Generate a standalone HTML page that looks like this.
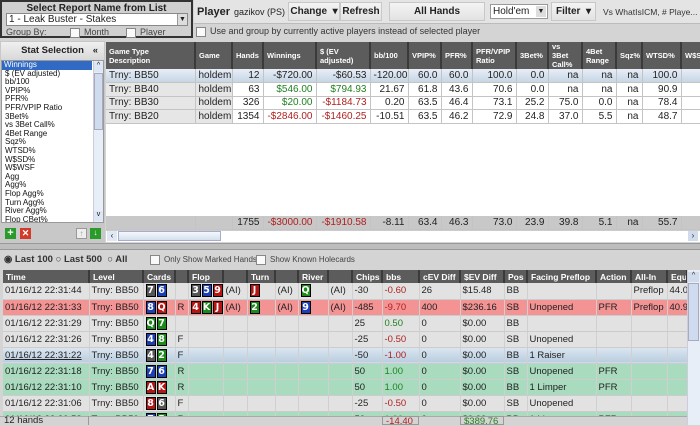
<!DOCTYPE html><html><head><style>
*{box-sizing:border-box;margin:0;padding:0}
body{width:700px;height:425px;overflow:hidden;background:#d4d4d4;font-family:"Liberation Sans",sans-serif;font-size:10px;color:#222;position:relative}
.a{position:absolute;white-space:nowrap}
.btn{position:absolute;background:linear-gradient(#f4f4f4,#e2e2e2);border:1px solid #c8c8c8;font-weight:bold;font-size:10px;text-align:center;line-height:17px;height:19px;top:2px}
table{border-collapse:collapse;table-layout:fixed;position:absolute}
td{white-space:nowrap;overflow:hidden;padding:0 2px}
.g th{background:#5c5c5c;color:#fff;font-size:7.5px;font-weight:bold;text-align:left;padding:0 3px;border-right:2px solid #3a3a3a;height:26px;line-height:9px;white-space:normal;overflow:hidden}
.g td{font-size:10px;height:13.5px;text-align:right;border-right:1px solid #c4c4c4;border-bottom:1px solid #c4c4c4;background:#fff;padding:0 3px}
.g td.l{text-align:left;background:#e6e6e6}
.g tr.s td{background:linear-gradient(#e8eef6,#c6d6e6)}
.r{color:#b02020}.gr{color:#208020}
.h th{background:#5c5c5c;color:#fff;font-size:8.5px;font-weight:bold;text-align:left;padding:0 3px;border-right:2px solid #3a3a3a;height:13px;overflow:hidden;white-space:nowrap}
.h td{height:16px;font-size:9.5px;border-right:1px solid #d0d0d0;border-bottom:1px solid #ccc;background:#e2e2e2;padding:0 2px}
.h tr.rd td{background:#f39393}
.h tr.gn td{background:#a9dcbf}
.h tr.sl td{background:linear-gradient(#dce6f0,#b8cee0);border-top:1px solid #556;}
.c{display:inline-block;width:10px;height:13px;color:#fff;font-weight:bold;line-height:12px;text-align:center;margin-right:1px;vertical-align:middle;border:1px solid #000;font-family:"DejaVu Sans",sans-serif;font-size:9.5px}
.k{background:#555}.b{background:#1d3fb5}.e{background:#b51515}.n{background:#1b8a1b}
.cb{display:inline-block;width:10px;height:10px;border:1px solid #888;background:#fafafa;vertical-align:middle;margin-right:4px}
</style></head><body>
<div class="a" style="left:0;top:0;width:193px;height:38px;border:2px solid #333;background:#d0d0d0">
<div class="a" style="left:0;top:1px;width:189px;text-align:center;font-weight:bold;font-size:10px">Select Report Name from List</div>
<div class="a" style="left:4px;top:11px;width:182px;height:13px;background:#fff;border:1px solid #888;font-size:10px;line-height:11px;padding-left:2px">1 - Leak Buster - Stakes</div>
<div class="a" style="left:175px;top:12px;width:10px;height:11px;background:#ddd;border-left:1px solid #999;font-size:7px;text-align:center;line-height:11px">▼</div>
<div class="a" style="left:4px;top:25px;font-size:9px;color:#444">Group By:</div>
<div class="a" style="left:68px;top:25px;font-size:9px;color:#444"><span class="cb"></span>Month</div>
<div class="a" style="left:124px;top:25px;font-size:9px;color:#444"><span class="cb"></span>Player</div>
</div>
<div class="a" style="left:194px;top:0;width:506px;height:24px;background:#e4e4e4;border-bottom:1px solid #bbb"></div>
<div class="a" style="left:197px;top:6px;font-weight:bold;font-size:11px">Player</div>
<div class="a" style="left:234px;top:7px;font-size:9px">gazikov (PS)</div>
<div class="btn" style="left:288px;width:52px">Change &nbsp;▾</div>
<div class="btn" style="left:340px;width:42px">Refresh</div>
<div class="btn" style="left:389px;width:96px">All Hands</div>
<div class="a" style="left:490px;top:4px;width:58px;height:15px;background:#fff;border:1px solid #999;font-size:10px;line-height:13px;padding-left:2px">Hold'em<span style="position:absolute;right:1px;top:1px;width:10px;height:11px;background:#ddd;font-size:7px;text-align:center;line-height:11px">▼</span></div>
<div class="btn" style="left:551px;width:45px">Filter &nbsp;▾</div>
<div class="a" style="left:603px;top:7px;font-size:8.5px;color:#333">Vs WhatIsICM, # Playe...</div>
<div class="a" style="left:196px;top:26px;font-size:9px;color:#333"><span class="cb"></span>Use and group by currently active players instead of selected player</div>
<div class="a" style="left:0;top:41px;width:105px;height:202px;background:#c8c8c8"></div>
<div class="a" style="left:1px;top:42px;width:103px;height:18px;background:linear-gradient(#f0f0f0,#d8d8d8);font-weight:bold;font-size:9.5px;text-align:center;line-height:18px">Stat Selection<span style="position:absolute;right:6px">«</span></div>
<div class="a" style="left:1px;top:60px;width:103px;height:163px;background:#fff;border:1px solid #999;overflow:hidden;font-size:8px;line-height:8.6px;color:#111">
<div style="background:#316ac5;color:#fff;padding-left:2px;width:90px">Winnings</div>
<div style="padding-left:3px">$ (EV adjusted)<br>bb/100<br>VPIP%<br>PFR%<br>PFR/VPIP Ratio<br>3Bet%<br>vs 3Bet Call%<br>4Bet Range<br>Sqz%<br>WTSD%<br>W$SD%<br>W$WSF<br>Agg<br>Agg%<br>Flop Agg%<br>Turn Agg%<br>River Agg%<br>Flop CBet%</div>
<div class="a" style="left:91px;top:0;width:11px;height:162px;background:#e8eef8;border-left:1px solid #ccd"></div>
<div class="a" style="left:92px;top:1px;width:9px;height:10px;background:#dde6f4;font-size:7px;text-align:center">^</div>
<div class="a" style="left:92px;top:12px;width:9px;height:57px;background:#cfdcf0;border:1px solid #aab"></div>
<div class="a" style="left:92px;top:150px;width:9px;height:10px;background:#dde6f4;font-size:7px;text-align:center">v</div>
</div>
<div class="a" style="left:5px;top:228px;width:11px;height:11px;background:#2a9a2a;color:#fff;font-weight:bold;font-size:11px;line-height:10px;text-align:center">+</div>
<div class="a" style="left:20px;top:228px;width:11px;height:11px;background:#d23a2a;color:#fff;font-weight:bold;font-size:9px;line-height:11px;text-align:center">✕</div>
<div class="a" style="left:76px;top:228px;width:11px;height:11px;background:#eee;border:1px solid #999;font-size:8px;line-height:9px;text-align:center;color:#999">↑</div>
<div class="a" style="left:90px;top:228px;width:11px;height:11px;background:#2a9a2a;color:#fff;font-size:8px;line-height:10px;text-align:center">↓</div>
<div class="a" style="left:106px;top:42px;width:594px;height:188px;background:#fff"></div>
<table class="g" style="left:106px;top:42px;width:610px">
<colgroup><col style="width:89px"><col style="width:37px"><col style="width:31px"><col style="width:53px"><col style="width:54px"><col style="width:38px"><col style="width:33px"><col style="width:31px"><col style="width:44px"><col style="width:32px"><col style="width:34px"><col style="width:34px"><col style="width:26px"><col style="width:39px"><col style="width:35px"></colgroup>
<tr><th>Game Type Description</th><th>Game</th><th>Hands</th><th>Winnings</th><th>$ (EV adjusted)</th><th>bb/100</th><th>VPIP%</th><th>PFR%</th><th>PFR/VPIP Ratio</th><th>3Bet%</th><th>vs 3Bet Call%</th><th>4Bet Range</th><th>Sqz%</th><th>WTSD%</th><th>W$SD</th></tr>
<tr class="s"><td class="l">Trny: BB50</td><td class="l">holdem</td><td>12</td><td>-$720.00</td><td>-$60.53</td><td>-120.00</td><td>60.0</td><td>60.0</td><td>100.0</td><td>0.0</td><td>na</td><td>na</td><td>na</td><td>100.0</td><td></td></tr>
<tr><td class="l">Trny: BB40</td><td class="l">holdem</td><td>63</td><td class="gr">$546.00</td><td class="gr">$794.93</td><td>21.67</td><td>61.8</td><td>43.6</td><td>70.6</td><td>0.0</td><td>na</td><td>na</td><td>na</td><td>90.9</td><td>4</td></tr>
<tr><td class="l">Trny: BB30</td><td class="l">holdem</td><td>326</td><td class="gr">$20.00</td><td class="r">-$1184.73</td><td>0.20</td><td>63.5</td><td>46.4</td><td>73.1</td><td>25.2</td><td>75.0</td><td>0.0</td><td>na</td><td>78.4</td><td>4</td></tr>
<tr><td class="l">Trny: BB20</td><td class="l">holdem</td><td>1354</td><td class="r">-$2846.00</td><td class="r">-$1460.25</td><td>-10.51</td><td>63.5</td><td>46.2</td><td>72.9</td><td>24.8</td><td>37.0</td><td>5.5</td><td>na</td><td>48.7</td><td>4</td></tr>
</table>
<table class="g" style="left:106px;top:216px;width:610px">
<colgroup><col style="width:89px"><col style="width:37px"><col style="width:31px"><col style="width:53px"><col style="width:54px"><col style="width:38px"><col style="width:33px"><col style="width:31px"><col style="width:44px"><col style="width:32px"><col style="width:34px"><col style="width:34px"><col style="width:26px"><col style="width:39px"><col style="width:35px"></colgroup>
<tr><td style="background:#c8c8c8"></td><td style="background:#c8c8c8"></td><td style="background:#c8c8c8">1755</td><td style="background:#c8c8c8" class="r">-$3000.00</td><td style="background:#c8c8c8" class="r">-$1910.58</td><td style="background:#c8c8c8">-8.11</td><td style="background:#c8c8c8">63.4</td><td style="background:#c8c8c8">46.3</td><td style="background:#c8c8c8">73.0</td><td style="background:#c8c8c8">23.9</td><td style="background:#c8c8c8">39.8</td><td style="background:#c8c8c8">5.1</td><td style="background:#c8c8c8">na</td><td style="background:#c8c8c8">55.7</td><td style="background:#c8c8c8">4</td></tr>
</table>
<div class="a" style="left:106px;top:230px;width:594px;height:12px;background:#fff;border-top:1px solid #ccc"></div>
<div class="a" style="left:107px;top:231px;width:10px;height:10px;background:#e0e8f4;font-size:8px;text-align:center;line-height:10px">‹</div>
<div class="a" style="left:118px;top:231px;width:103px;height:10px;background:linear-gradient(#f4f8fc,#d4e0ee);border:1px solid #aac"></div>
<div class="a" style="left:688px;top:231px;width:10px;height:10px;background:#d0dcec;font-size:8px;text-align:center;line-height:10px">›</div>
<div class="a" style="left:0;top:243px;width:700px;height:7px;background:#bdbdbd;border-top:1px solid #999;border-bottom:1px solid #999"></div>
<div class="a" style="left:4px;top:254px;font-size:9.5px;font-weight:bold;color:#333">◉ Last 100 ○ Last 500 &nbsp;○ All</div>
<div class="a" style="left:150px;top:255px;font-size:8px;color:#444"><span class="cb"></span>Only Show Marked Hands</div>
<div class="a" style="left:256px;top:255px;font-size:8px;color:#444"><span class="cb"></span>Show Known Holecards</div>
<div class="a" style="left:0;top:270px;width:687px;height:146px;overflow:hidden">
<table class="h" style="left:3px;top:0;width:684px">
<colgroup><col style="width:86px"><col style="width:54px"><col style="width:32px"><col style="width:13px"><col style="width:35px"><col style="width:24px"><col style="width:28px"><col style="width:23px"><col style="width:30px"><col style="width:24px"><col style="width:30px"><col style="width:37px"><col style="width:41px"><col style="width:44px"><col style="width:23px"><col style="width:69px"><col style="width:35px"><col style="width:36px"><col style="width:20px"></colgroup>
<tr><th>Time</th><th>Level</th><th>Cards</th><th></th><th>Flop</th><th></th><th>Turn</th><th></th><th>River</th><th></th><th>Chips</th><th>bbs</th><th>cEV Diff</th><th>$EV Diff</th><th>Pos</th><th>Facing Preflop</th><th>Action</th><th>All-In</th><th>Equ</th></tr>
<tr><td>01/16/12 22:31:44</td><td>Trny: BB50</td><td><span class="c k">7</span><span class="c b">6</span></td><td></td><td><span class="c k">3</span><span class="c b">5</span><span class="c e">9</span></td><td>(AI)</td><td><span class="c e">J</span></td><td>(AI)</td><td><span class="c n">Q</span></td><td>(AI)</td><td>-30</td><td class="r">-0.60</td><td>26</td><td>$15.48</td><td>BB</td><td></td><td></td><td>Preflop</td><td>44.0</td></tr>
<tr class="rd"><td>01/16/12 22:31:33</td><td>Trny: BB50</td><td><span class="c b">8</span><span class="c e">Q</span></td><td>R</td><td><span class="c e">4</span><span class="c n">K</span><span class="c e">J</span></td><td>(AI)</td><td><span class="c n">2</span></td><td>(AI)</td><td><span class="c b">9</span></td><td>(AI)</td><td>-485</td><td class="r">-9.70</td><td>400</td><td>$236.16</td><td>SB</td><td>Unopened</td><td>PFR</td><td>Preflop</td><td>40.9</td></tr>
<tr><td>01/16/12 22:31:29</td><td>Trny: BB50</td><td><span class="c n">Q</span><span class="c n">7</span></td><td></td><td></td><td></td><td></td><td></td><td></td><td></td><td>25</td><td class="gr">0.50</td><td>0</td><td>$0.00</td><td>BB</td><td></td><td></td><td></td><td></td></tr>
<tr><td>01/16/12 22:31:26</td><td>Trny: BB50</td><td><span class="c b">4</span><span class="c n">8</span></td><td>F</td><td></td><td></td><td></td><td></td><td></td><td></td><td>-25</td><td class="r">-0.50</td><td>0</td><td>$0.00</td><td>SB</td><td>Unopened</td><td></td><td></td><td></td></tr>
<tr class="sl"><td style="text-decoration:underline">01/16/12 22:31:22</td><td>Trny: BB50</td><td><span class="c k">4</span><span class="c n">2</span></td><td>F</td><td></td><td></td><td></td><td></td><td></td><td></td><td>-50</td><td class="r">-1.00</td><td>0</td><td>$0.00</td><td>BB</td><td>1 Raiser</td><td></td><td></td><td></td></tr>
<tr class="gn"><td>01/16/12 22:31:18</td><td>Trny: BB50</td><td><span class="c b">7</span><span class="c b">6</span></td><td>R</td><td></td><td></td><td></td><td></td><td></td><td></td><td>50</td><td class="gr">1.00</td><td>0</td><td>$0.00</td><td>SB</td><td>Unopened</td><td>PFR</td><td></td><td></td></tr>
<tr class="gn"><td>01/16/12 22:31:10</td><td>Trny: BB50</td><td><span class="c e">A</span><span class="c e">K</span></td><td>R</td><td></td><td></td><td></td><td></td><td></td><td></td><td>50</td><td class="gr">1.00</td><td>0</td><td>$0.00</td><td>BB</td><td>1 Limper</td><td>PFR</td><td></td><td></td></tr>
<tr><td>01/16/12 22:31:06</td><td>Trny: BB50</td><td><span class="c e">8</span><span class="c k">6</span></td><td>F</td><td></td><td></td><td></td><td></td><td></td><td></td><td>-25</td><td class="r">-0.50</td><td>0</td><td>$0.00</td><td>SB</td><td>Unopened</td><td></td><td></td><td></td></tr>
<tr class="gn"><td>01/16/12 22:30:58</td><td>Trny: BB50</td><td><span class="c b">7</span><span class="c n">5</span></td><td>R</td><td></td><td></td><td></td><td></td><td></td><td></td><td>50</td><td class="gr">1.00</td><td>0</td><td>$0.00</td><td>BB</td><td>1 Limper</td><td>PFR</td><td></td><td></td></tr>
</table>
</div>
<div class="a" style="left:687px;top:270px;width:13px;height:155px;background:#e8eef8;border-left:1px solid #ccd"></div>
<div class="a" style="left:688px;top:272px;width:11px;height:10px;background:#d0dcec;font-size:7px;text-align:center">^</div>
<div class="a" style="left:688px;top:283px;width:11px;height:58px;background:#cfdcf0;border:1px solid #aab"></div>
<div class="a" style="left:0;top:416px;width:687px;height:9px;background:#d4d4d4;border-top:1px solid #aaa"></div>
<div class="a" style="left:4px;top:415px;font-size:9.5px">12 hands</div>
<div class="a" style="left:88px;top:416px;height:9px;border-left:1px solid #999"></div>
<div class="a" style="left:382px;top:416px;width:37px;height:9px;border:1px solid #999;font-size:9.5px;line-height:9px;color:#b02020;padding-left:3px;overflow:hidden">-14.40</div>
<div class="a" style="left:460px;top:416px;width:44px;height:9px;border:1px solid #999;font-size:9.5px;line-height:9px;color:#208020;padding-left:3px;overflow:hidden">$389.76</div>
</body></html>
